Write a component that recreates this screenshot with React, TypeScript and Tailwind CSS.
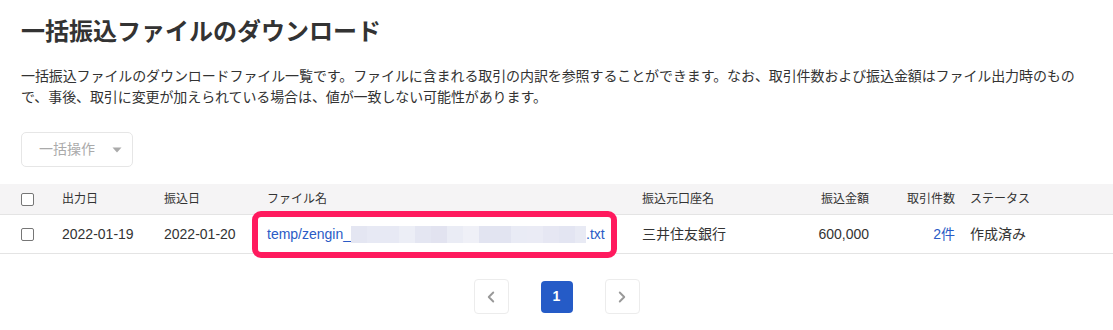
import { ChevronLeft, ChevronRight } from "lucide-react";

const maskBlocks = [
  "w-[16px] bg-[#e4e6f2]",
  "w-[16px] bg-[#e7e9f4]",
  "w-[16px] bg-[#e7e9f4]",
  "w-[16px] bg-[#eceef6]",
  "w-[16px] bg-[#e4e6f2]",
  "w-[16px] bg-[#e2e3f0]",
  "w-[16px] bg-[#eaecf5]",
  "w-[16px] bg-[#eff0f7]",
  "w-[16px] bg-[#e2e4f1]",
  "w-[16px] bg-[#e2e4f1]",
  "w-[16px] bg-[#e9ebf5]",
  "w-[16px] bg-[#eaebf5]",
  "w-[16px] bg-[#e6e7f3]",
  "w-[16px] bg-[#e3e5f2]",
  "w-[11px] bg-[#e8eaf4]",
];

const Checkbox = () => (
  <span className="block w-[13px] h-[13px] border border-[#767676] rounded-[2px] bg-white" />
);

const App = () => {
  return (
    <div className="w-[1113px] h-[330px] bg-white text-[#333] overflow-hidden font-['Liberation_Sans','Noto_Sans_CJK_JP',sans-serif]">
      <div className="px-[21px] pt-[16px]">
        <h1 className="text-[24px] leading-[32px] font-bold text-[#333]">一括振込ファイルのダウンロード</h1>
        <p className="mt-[18px] text-[14px] leading-[21px] tracking-[-0.1px] text-[#333]">
          一括振込ファイルのダウンロードファイル一覧です。ファイルに含まれる取引の内訳を参照することができます。なお、取引件数および振込金額はファイル出力時のもの
          <br />
          で、事後、取引に変更が加えられている場合は、値が一致しない可能性があります。
        </p>
        <button className="mt-[24px] w-[112px] h-[35px] border border-[#e6e6e6] rounded-[5px] flex items-center pl-[17px] gap-[17px] text-[14px] text-[#aaa]">
          <span>一括操作</span>
          <svg width="10" height="6" viewBox="0 0 10 6">
            <path d="M0.5 0.5 L9.5 0.5 L5 5.5 Z" fill="#aaa" />
          </svg>
        </button>
      </div>

      {/* Table */}
      <div className="mt-[17px]">
        <div className="grid grid-cols-[62px_102px_103px_375px_128px_99px_86px_1fr] items-center h-[31px] bg-[#f5f4f5] border-b border-[#e4e4e4] text-[12px] text-[#333]">
          <div className="pl-[21px]"><Checkbox /></div>
          <div>出力日</div>
          <div>振込日</div>
          <div>ファイル名</div>
          <div>振込元口座名</div>
          <div className="text-right">振込金額</div>
          <div className="text-right">取引件数</div>
          <div className="pl-[15px]">ステータス</div>
        </div>
        <div className="grid grid-cols-[62px_102px_103px_375px_128px_99px_86px_1fr] items-center h-[39px] border-b border-[#e4e4e4] text-[14px] text-[#333]">
          <div className="pl-[21px]"><Checkbox /></div>
          <div>2022-01-19</div>
          <div>2022-01-20</div>
          <div className="relative flex items-center text-[#2a5bc6]">
            <span>temp/zengin_</span>
            <span className="flex h-[17px]">
              {maskBlocks.map((c, i) => (
                <span key={i} className={c} />
              ))}
            </span>
            <span>.txt</span>
            <span className="absolute left-[-15px] top-[-13px] w-[365px] h-[47px] border-[6px] border-[#ff1a5e] rounded-[9px]" />
          </div>
          <div>三井住友銀行</div>
          <div className="text-right">600,000</div>
          <div className="text-right text-[#2a5bc6]">2件</div>
          <div className="pl-[15px]">作成済み</div>
        </div>
      </div>

      {/* Pagination */}
      <div className="mt-[25px] flex justify-center items-center gap-[32px]">
        <button className="w-[35px] h-[35px] border border-[#ececec] rounded-[4px] flex items-center justify-center text-[#999]">
          <ChevronLeft size={18} strokeWidth={2.5} />
        </button>
        <button className="w-[32px] h-[32px] rounded-[4px] bg-[#255bc7] text-white text-[14px] font-bold flex items-center justify-center">
          1
        </button>
        <button className="w-[35px] h-[35px] border border-[#ececec] rounded-[4px] flex items-center justify-center text-[#999]">
          <ChevronRight size={18} strokeWidth={2.5} />
        </button>
      </div>
    </div>
  );
};

export default App;
